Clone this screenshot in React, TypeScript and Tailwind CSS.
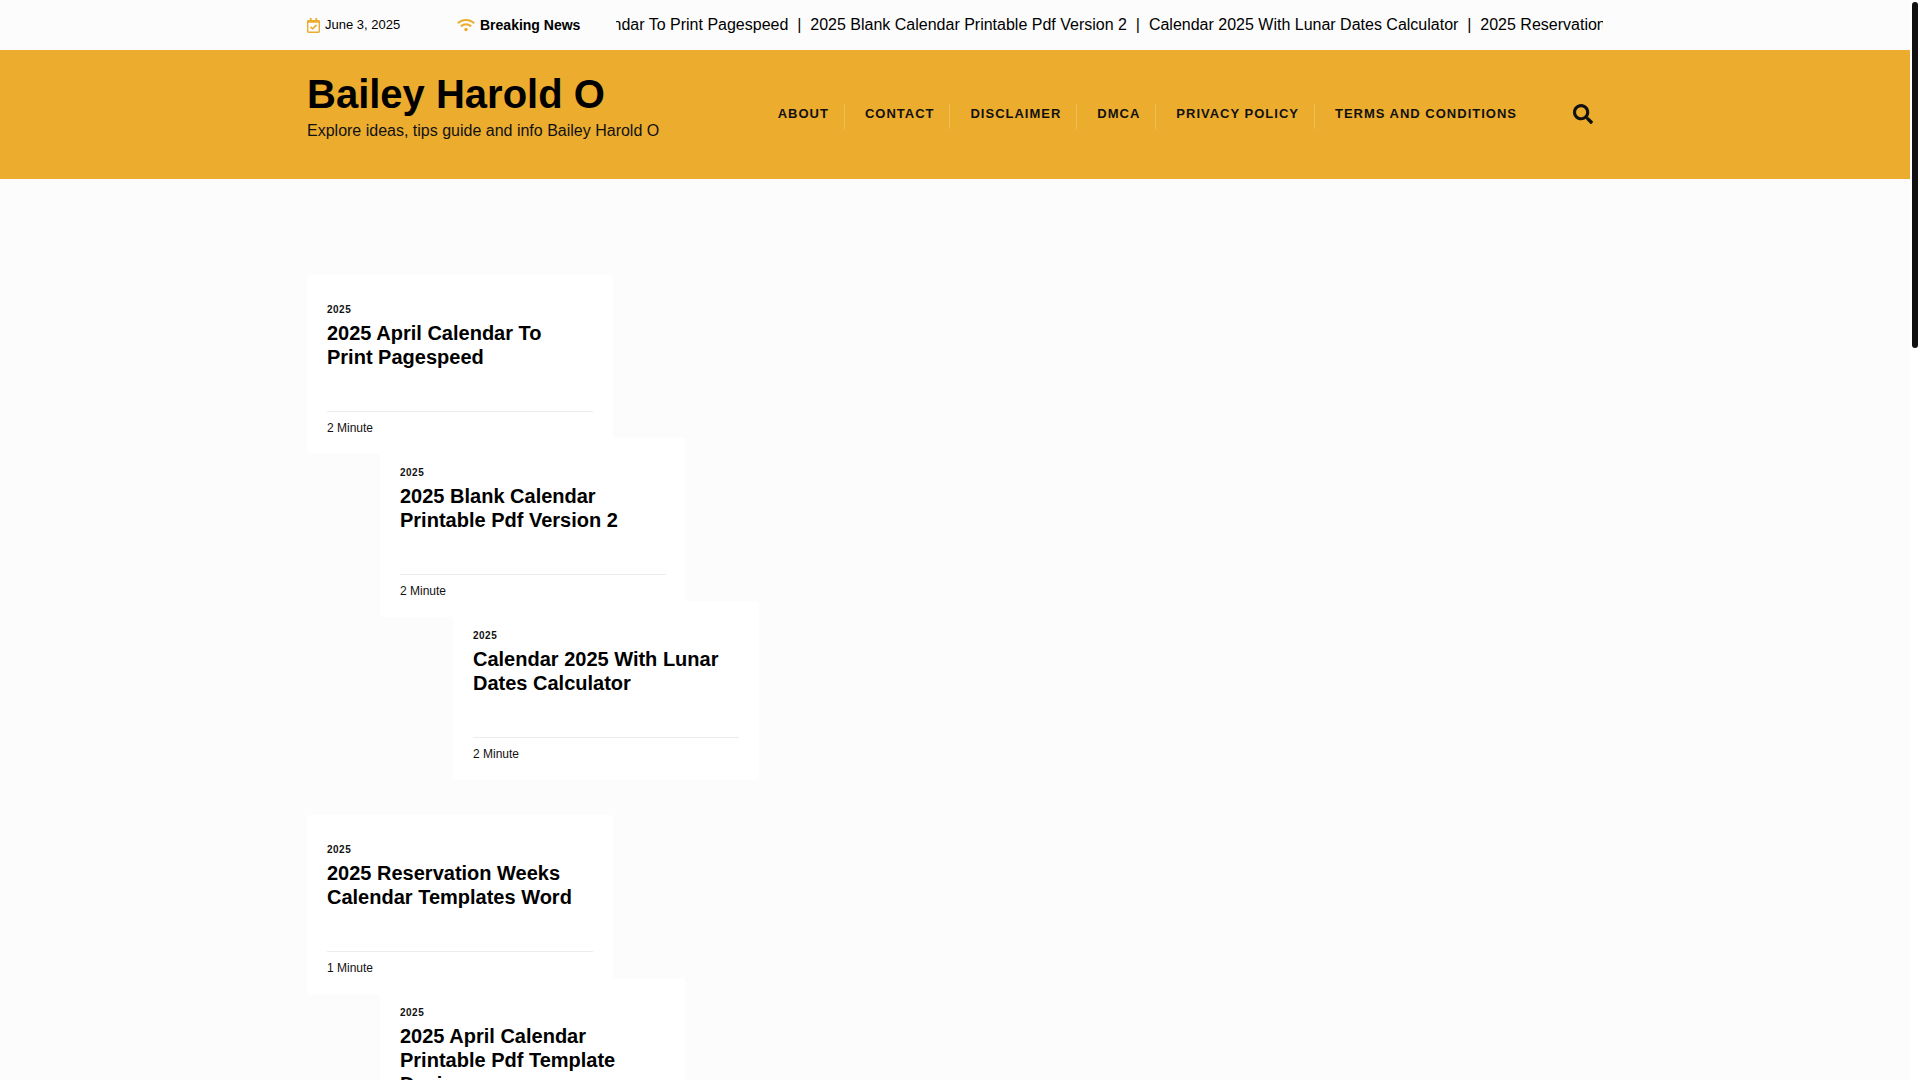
import { FaRegCalendarCheck, FaSearch, FaWifi } from "react-icons/fa";

const headlines = [
  "2025 April Calendar To Print Pagespeed",
  "2025 Blank Calendar Printable Pdf Version 2",
  "Calendar 2025 With Lunar Dates Calculator",
  "2025 Reservation Weeks Calendar Templates Word",
];

const menu = [
  "About",
  "Contact",
  "Disclaimer",
  "DMCA",
  "Privacy Policy",
  "Terms and Conditions",
];

type Post = { title: string; minutes: number };

const groups: Post[][] = [
  [
    { title: "2025 April Calendar To Print Pagespeed", minutes: 2 },
    { title: "2025 Blank Calendar Printable Pdf Version 2", minutes: 2 },
    { title: "Calendar 2025 With Lunar Dates Calculator", minutes: 2 },
  ],
  [
    { title: "2025 Reservation Weeks Calendar Templates Word", minutes: 1 },
    { title: "2025 April Calendar Printable Pdf Template Design", minutes: 2 },
  ],
];

// each card in a group steps further to the right
const steps = ["", "ml-[73px] -mt-4", "ml-[146px] -mt-4"];

function TopBar() {
  return (
    <div className="mx-auto flex h-[50px] max-w-[1320px] items-center px-3">
      <div className="flex w-[150px] shrink-0 items-center gap-[5px] text-[13px]">
        <FaRegCalendarCheck className="h-[15px] w-[13px] text-[#ecac2e]" />
        <time dateTime="2025-06-03">June 3, 2025</time>
      </div>
      <div className="flex w-[159px] shrink-0 items-center gap-[5px] text-sm font-bold">
        <FaWifi className="h-[14px] w-[18px] text-[#ecac2e]" />
        <span>Breaking News</span>
      </div>
      <div className="flex min-w-0 flex-1 justify-start overflow-hidden">
        <div className="-ml-28 flex shrink-0 whitespace-nowrap text-base">
          {headlines.map((text, i) => (
            <span key={text} className="whitespace-pre">
              {i > 0 && "  |  "}
              <a href="#">{text}</a>
            </span>
          ))}
        </div>
      </div>
    </div>
  );
}

function Header() {
  return (
    <header className="bg-[#ecac2e]">
      <div className="mx-auto flex max-w-[1320px] items-start justify-between px-3 pt-5 pb-9">
        <div>
          <h1 className="text-[40px] leading-12 font-bold">
            <a href="#">Bailey Harold O</a>
          </h1>
          <p className="mt-px text-base leading-6 text-[#111]">
            Explore ideas, tips guide and info Bailey Harold O
          </p>
        </div>
        <div className="flex items-start gap-14 pt-[34px] pr-[10px] text-[#111]">
          <nav>
            <ul className="flex gap-5">
              {menu.map((item, i) => (
                <li
                  key={item}
                  className={
                    i < menu.length - 1
                      ? "border-r border-[#f0bd58] pr-[15px] pb-1.5"
                      : "pb-1.5"
                  }
                >
                  <a
                    href="#"
                    className="block text-[13px] leading-[19px] font-bold tracking-[1px] uppercase"
                  >
                    {item}
                  </a>
                </li>
              ))}
            </ul>
          </nav>
          <button type="button" aria-label="Search">
            <FaSearch className="size-5" />
          </button>
        </div>
      </div>
    </header>
  );
}

function PostCard({ post, step }: { post: Post; step: string }) {
  return (
    <article
      className={`relative w-[306px] rounded-[5px] bg-white px-5 pt-[29px] pb-[17px] ${step}`}
    >
      <a
        href="#"
        className="block text-[10px] leading-3 font-bold tracking-wider text-[#111]"
      >
        2025
      </a>
      <h2 className="mt-[5px] min-h-[90px] pr-4 text-xl leading-6 font-bold">
        <a href="#">{post.title}</a>
      </h2>
      <p className="border-t border-[#ececec] pt-[7px] text-xs leading-[18px] text-[#111]">
        {post.minutes} Minute
      </p>
    </article>
  );
}

export default function App() {
  return (
    <div className="flex h-screen overflow-hidden bg-white font-['Liberation_Sans',Arial,sans-serif] text-black">
      <div className="min-w-0 flex-1 bg-[#fcfcfc]">
        <TopBar />
        <Header />
        <main className="mx-auto flex max-w-[1320px] flex-col gap-[35px] px-3 pt-24">
          {groups.map((posts, g) => (
            <section key={g}>
              {posts.map((post, i) => (
                <PostCard key={post.title} post={post} step={steps[i]} />
              ))}
            </section>
          ))}
        </main>
      </div>

      {/* scroll track */}
      <div className="w-[10px] shrink-0 p-0.5">
        <div className="h-[346px] w-1.5 rounded-full bg-[#111]" />
      </div>
    </div>
  );
}
